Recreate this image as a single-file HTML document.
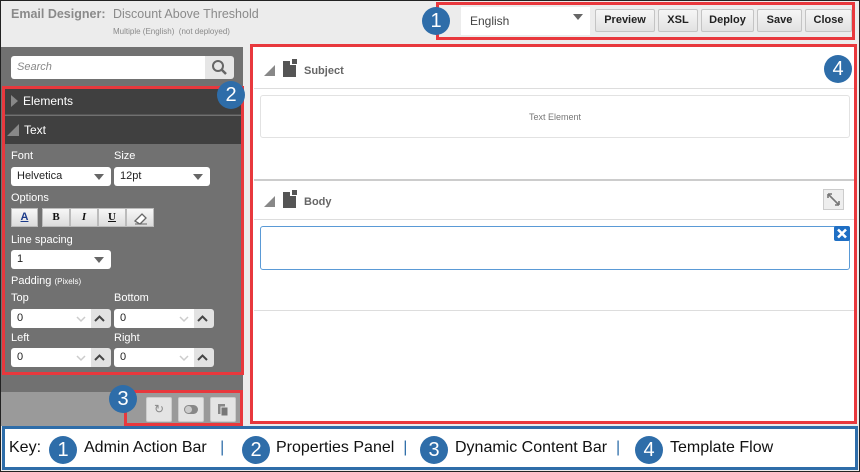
<!DOCTYPE html>
<html><head><style>
*{box-sizing:border-box;margin:0;padding:0}
body{width:860px;height:472px;position:relative;overflow:hidden;background:#ececec;font-family:"Liberation Sans",Arial,sans-serif;}
.a{position:absolute}
.c{position:absolute;width:28px;height:28px;border-radius:50%;background:#2e6da9;color:#fff;font-family:"Liberation Sans",sans-serif;font-size:20px;text-align:center;line-height:29px;z-index:5}
.btn{position:absolute;top:9px;height:23px;background:linear-gradient(#f6f6f6,#e2e2e2);border:1px solid #c4c4c4;border-radius:2px;font-size:11px;font-weight:bold;color:#222;text-align:center;line-height:21px}
.lbl{position:absolute;color:#fff;font-size:11px}
.sel{position:absolute;height:19px;background:#fff;border-radius:3px;font-size:11px;color:#222;padding:3px 6px}
.sel:after{content:"";position:absolute;right:7px;top:7px;border:5px solid transparent;border-top:6px solid #666;border-bottom:0}
.sp{position:absolute;height:19px;width:97px;background:#fff;border-radius:3px;font-size:11px;color:#222;padding:3px 6px}
.sp i{position:absolute;top:0;width:20px;height:19px}
.fb{position:absolute;top:208px;height:19px;background:linear-gradient(#f7f7f7,#dcdcdc);border:1px solid #bbb;font-size:11px;font-weight:bold;text-align:center;line-height:17px;color:#111;font-family:"Liberation Serif",serif}
.red{position:absolute;border:3px solid #e8383d;z-index:4}
.sb{position:absolute;top:397px;width:26px;height:25px;background:#e4e4e4;border:1px solid #ccc;border-radius:2px;color:#888;font-size:12px;text-align:center;line-height:23px}
.k{position:absolute;top:439px;font-size:16px;color:#111;white-space:nowrap;z-index:6}
</style></head><body>
<div class="a" style="left:0;top:0;width:860px;height:472px;border:1px solid #222;z-index:9;pointer-events:none"></div>
<div class="a" style="left:11px;top:7px;font-size:12.5px;font-weight:bold;color:#8a8a8a">Email Designer:</div>
<div class="a" style="left:113px;top:7px;font-size:12.5px;color:#8a8a8a">Discount Above Threshold</div>
<div class="a" style="left:113px;top:27px;font-size:8px;color:#8a8a8a">Multiple (English)&nbsp; (not deployed)</div>
<div class="sel" style="left:461px;top:7px;width:129px;height:28px;border-radius:0;font-size:12px;color:#444;padding:7px 9px">English</div>
<div class="btn" style="left:595px;width:60px">Preview</div>
<div class="btn" style="left:658px;width:40px">XSL</div>
<div class="btn" style="left:701px;width:53px">Deploy</div>
<div class="btn" style="left:757px;width:45px">Save</div>
<div class="btn" style="left:805px;width:47px">Close</div>
<div class="red" style="left:436px;top:2px;width:419px;height:38px"></div>
<div class="c" style="left:422px;top:7px">1</div>
<div class="a" style="left:1px;top:47px;width:242px;height:345px;background:#717171"></div>
<div class="a" style="left:1px;top:392px;width:242px;height:34px;background:#9a9a9a"></div>
<div class="a" style="left:11px;top:56px;width:194px;height:23px;background:#fff;border-radius:3px 0 0 3px;font-size:11px;font-style:italic;color:#888;padding:5px 6px">Search</div>
<div class="a" style="left:205px;top:56px;width:29px;height:23px;background:#e6e6e6;border-radius:0 3px 3px 0"><svg width="29" height="23"><circle cx="13" cy="10" r="5" fill="none" stroke="#666" stroke-width="2"/><line x1="17" y1="14" x2="21" y2="18" stroke="#666" stroke-width="2.5"/></svg></div>
<div class="a" style="left:3px;top:88px;width:239px;height:27px;background:#404040;border-bottom:1px solid #555"></div>
<div class="a" style="left:11px;top:95px;border:6px solid transparent;border-left:7px solid #888"></div>
<div class="lbl" style="left:23px;top:94px;font-size:12px">Elements</div>
<div class="a" style="left:3px;top:116px;width:239px;height:28px;background:#404040"></div>
<div class="a" style="left:7px;top:124px;border-left:12px solid transparent;border-bottom:12px solid #888"></div>
<div class="lbl" style="left:24px;top:123px;font-size:12px">Text</div>
<div class="lbl" style="left:11px;top:150px">Font</div>
<div class="lbl" style="left:114px;top:150px">Size</div>
<div class="sel" style="left:11px;top:167px;width:100px">Helvetica</div>
<div class="sel" style="left:114px;top:167px;width:96px">12pt</div>
<div class="lbl" style="left:11px;top:192px">Options</div>
<div class="fb" style="left:11px;width:27px;color:#1b3a8a;text-decoration:underline;font-family:'Liberation Sans'">A</div>
<div class="fb" style="left:42px;width:28px">B</div>
<div class="fb" style="left:70px;width:28px;font-style:italic">I</div>
<div class="fb" style="left:98px;width:28px;text-decoration:underline">U</div>
<div class="fb" style="left:126px;width:28px"><svg width="26" height="17"><path d="M8 12 L15 5 L19 9 L13 15 Z" fill="#fff" stroke="#666" stroke-width="1.3"/><line x1="8" y1="15" x2="20" y2="15" stroke="#666"/></svg></div>
<div class="lbl" style="left:11px;top:234px">Line spacing</div>
<div class="sel" style="left:11px;top:250px;width:100px">1</div>
<div class="lbl" style="left:11px;top:275px">Padding <span style="font-size:8px">(Pixels)</span></div>
<div class="lbl" style="left:11px;top:292px">Top</div>
<div class="lbl" style="left:114px;top:292px">Bottom</div>
<div class="sp" style="left:11px;top:309px">0<i style="left:60px"><svg width="20" height="19"><path d="M6 8l4 4 4-4" fill="none" stroke="#ccc" stroke-width="1.5"/></svg></i><i style="left:80px;background:#e2e2e2;border-radius:0 3px 3px 0"><svg width="17" height="19"><path d="M4 12l4.5-4.5 4.5 4.5" fill="none" stroke="#444" stroke-width="2"/></svg></i></div>
<div class="sp" style="left:114px;top:309px">0<i style="left:60px"><svg width="20" height="19"><path d="M6 8l4 4 4-4" fill="none" stroke="#ccc" stroke-width="1.5"/></svg></i><i style="left:80px;background:#e2e2e2;border-radius:0 3px 3px 0"><svg width="17" height="19"><path d="M4 12l4.5-4.5 4.5 4.5" fill="none" stroke="#444" stroke-width="2"/></svg></i></div>
<div class="lbl" style="left:11px;top:332px">Left</div>
<div class="lbl" style="left:114px;top:332px">Right</div>
<div class="sp" style="left:11px;top:348px">0<i style="left:60px"><svg width="20" height="19"><path d="M6 8l4 4 4-4" fill="none" stroke="#ccc" stroke-width="1.5"/></svg></i><i style="left:80px;background:#e2e2e2;border-radius:0 3px 3px 0"><svg width="17" height="19"><path d="M4 12l4.5-4.5 4.5 4.5" fill="none" stroke="#444" stroke-width="2"/></svg></i></div>
<div class="sp" style="left:114px;top:348px">0<i style="left:60px"><svg width="20" height="19"><path d="M6 8l4 4 4-4" fill="none" stroke="#ccc" stroke-width="1.5"/></svg></i><i style="left:80px;background:#e2e2e2;border-radius:0 3px 3px 0"><svg width="17" height="19"><path d="M4 12l4.5-4.5 4.5 4.5" fill="none" stroke="#444" stroke-width="2"/></svg></i></div>
<div class="red" style="left:2px;top:86px;width:242px;height:289px"></div>
<div class="c" style="left:217px;top:81px">2</div>
<div class="sb" style="left:146px">↻</div>
<div class="sb" style="left:178px"><svg width="24" height="23"><rect x="5" y="7" width="14" height="9" rx="4.5" fill="#888"/><circle cx="9.5" cy="11.5" r="3.5" fill="#ccc"/></svg></div>
<div class="sb" style="left:210px"><svg width="24" height="23"><rect x="7" y="6" width="7" height="10" fill="#888"/><rect x="10" y="9" width="7" height="9" fill="#777" stroke="#e4e4e4"/></svg></div>
<div class="red" style="left:124px;top:390px;width:119px;height:36px"></div>
<div class="c" style="left:109px;top:385px">3</div>
<div class="a" style="left:250px;top:44px;width:607px;height:380px;background:#fff"></div>
<div class="a" style="left:254px;top:88px;width:600px;height:1px;background:#ddd"></div>
<div class="a" style="left:264px;top:65px;border-left:11px solid transparent;border-bottom:11px solid #888"></div>
<div class="a" style="left:283px;top:61px;width:13px;height:16px;background:#555"></div>
<div class="a" style="left:290px;top:59px;width:8px;height:6px;background:#fff"></div>
<div class="a" style="left:292px;top:59px;width:5px;height:5px;background:#555"></div>
<div class="a" style="left:304px;top:65px;font-size:11px;font-weight:bold;color:#666">Subject</div>
<div class="a" style="left:260px;top:95px;width:590px;height:43px;border:1px solid #e2e2e2;border-radius:3px;font-size:9px;color:#777;text-align:center;line-height:42px">Text Element</div>
<div class="a" style="left:254px;top:179px;width:600px;height:2px;background:#ccc"></div>
<div class="a" style="left:254px;top:219px;width:600px;height:1px;background:#ddd"></div>
<div class="a" style="left:264px;top:196px;border-left:11px solid transparent;border-bottom:11px solid #888"></div>
<div class="a" style="left:283px;top:192px;width:13px;height:16px;background:#555"></div>
<div class="a" style="left:290px;top:190px;width:8px;height:6px;background:#fff"></div>
<div class="a" style="left:292px;top:190px;width:5px;height:5px;background:#555"></div>
<div class="a" style="left:304px;top:196px;font-size:11px;font-weight:bold;color:#666">Body</div>
<div class="a" style="left:823px;top:189px;width:21px;height:21px;background:#eee;border:1px solid #ccc"><svg width="19" height="19"><path d="M4 4l11 11M4 4h4M4 4v4M15 15h-4M15 15v-4" fill="none" stroke="#777" stroke-width="1.6"/></svg></div>
<div class="a" style="left:260px;top:226px;width:590px;height:44px;border:1px solid #5a9ad6;border-radius:3px"></div>
<div class="a" style="left:834px;top:226px;width:16px;height:15px;background:#1f6fc4;border-radius:2px"><svg width="16" height="15"><path d="M4 3.5l8 8M12 3.5l-8 8" stroke="#fff" stroke-width="2.6"/></svg></div>
<div class="a" style="left:254px;top:310px;width:600px;height:1px;background:#ddd"></div>
<div class="red" style="left:250px;top:44px;width:607px;height:380px"></div>
<div class="c" style="left:824px;top:55px">4</div>
<div class="a" style="left:2px;top:426px;width:856px;height:44px;background:#fff;border:3px solid #2e6da9"></div>
<div class="k" style="left:9px">Key:</div>
<div class="c" style="left:49px;top:436px">1</div>
<div class="k" style="left:84px">Admin Action Bar &nbsp;&nbsp;<span style="color:#2e6da9">|</span></div>
<div class="c" style="left:242px;top:436px">2</div>
<div class="k" style="left:276px">Properties Panel &nbsp;<span style="color:#2e6da9">|</span></div>
<div class="c" style="left:420px;top:436px">3</div>
<div class="k" style="left:455px">Dynamic Content Bar &nbsp;<span style="color:#2e6da9">|</span></div>
<div class="c" style="left:635px;top:436px">4</div>
<div class="k" style="left:670px">Template Flow</div>
</body></html>
